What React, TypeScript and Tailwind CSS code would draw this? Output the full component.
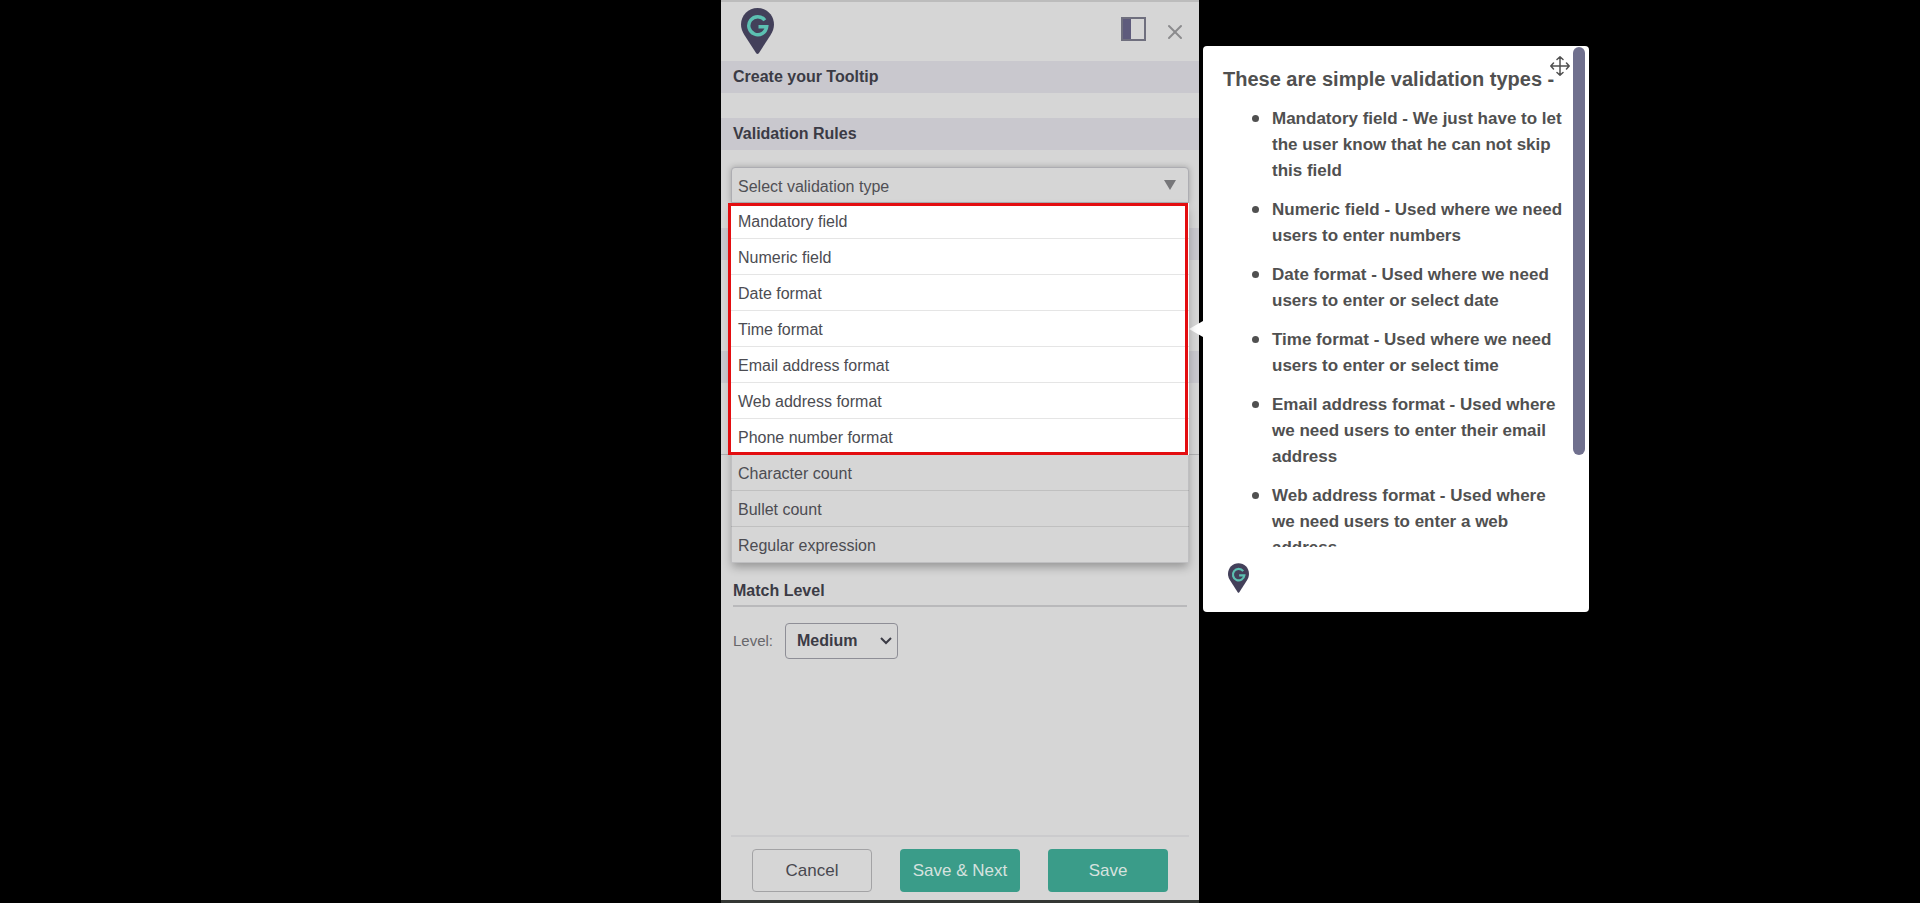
import { useState } from 'react'
import { X } from 'lucide-react'

const basicTypes = [
  'Mandatory field',
  'Numeric field',
  'Date format',
  'Time format',
  'Email address format',
  'Web address format',
  'Phone number format'
]

const otherTypes = ['Character count', 'Bullet count', 'Regular expression']

const hints = [
  'Mandatory field - We just have to let the user know that he can not skip this field',
  'Numeric field - Used where we need users to enter numbers',
  'Date format - Used where we need users to enter or select date',
  'Time format - Used where we need users to enter or select time',
  'Email address format - Used where we need users to enter their email address',
  'Web address format - Used where we need users to enter a web address'
]

const PinLogo = ({ className }: { className: string }) => (
  <svg viewBox="0 0 33 46" className={className} aria-hidden="true">
    <path
      d="M16.5 0C7.4 0 0 7.3 0 16.6c0 3.8 1.4 7.200 3.400 10.400L15.200 45.200q1.300 1.600 2.600 0L29.600 27C31.600 23.800 33 20.400 33 16.600 33 7.300 25.600 0 16.500 0z"
      fill="#43405a"
    />
    <path
      d="M23.900 12.200A9 9 0 1 0 25.700 18.800H17.500"
      fill="none"
      stroke="#5cc0b2"
      strokeWidth="3.400"
    />
  </svg>
)

const MoveIcon = () => (
  <svg
    viewBox="0 0 20 20"
    className="size-5"
    fill="none"
    stroke="#505050"
    strokeWidth="1.500"
    strokeLinecap="round"
    strokeLinejoin="round"
    aria-hidden="true"
  >
    <path d="M10 1v18M1 10h18M7 3.500L10 .8l3 2.700M7 16.500l3 2.700 3-2.700M3.500 7L.8 10l2.700 3M16.500 7l2.700 3-2.700 3" />
  </svg>
)

const SectionBar = ({ title }: { title?: string }) => (
  <div className="h-8 bg-[#c9c8ce] px-3 flex items-center">
    {title && <h2 className="text-base leading-6 font-bold text-[#3b3b45]">{title}</h2>}
  </div>
)

const TypeOption = ({ label }: { label: string }) => (
  <li role="option" aria-selected={false} className="h-9 border-b border-black/10 last:border-b-0">
    <button type="button" className="block h-full w-full px-[7px] pt-0.5 text-left text-base text-[#4c4c52]">
      {label}
    </button>
  </li>
)

const HintPopover = () => (
  <aside className="absolute left-full top-[46px] ml-1 w-[386px] rounded bg-white pt-px text-[#505050]">
    {/* pointer */}
    <svg viewBox="0 0 14 16" className="absolute right-full top-[275px] h-4 w-3.5" aria-hidden="true">
      <path d="M14 0L0 8l14 8z" fill="#fff" />
    </svg>

    <div className="h-[500px] overflow-y-auto [scrollbar-width:none] px-5 pt-4">
      <h3 className="text-xl leading-8 font-bold whitespace-nowrap">These are simple validation types -</h3>
      <ul className="mt-[11px] flex flex-col gap-[13px] pl-[49px] text-[17px] leading-[26px] font-bold">
        {hints.map((hint) => (
          <li key={hint} className="relative">
            <span className="absolute -left-5 top-[9px] size-[7px] rounded-full bg-[#505050]" />
            {hint}
          </li>
        ))}
      </ul>
    </div>

    <button type="button" aria-label="Move" className="absolute right-[19px] top-2.5">
      <MoveIcon />
    </button>
    <div className="absolute right-1 top-px h-[408px] w-3 rounded-full bg-[#70708e]" />

    <div className="pl-[25px] pt-4 pb-[19px]">
      <PinLogo className="h-[30px] w-[21px]" />
    </div>
  </aside>
)

const App = () => {
  const [level, setLevel] = useState('Medium')

  return (
    <div className="min-h-screen bg-black flex justify-center overflow-hidden font-['Liberation_Sans',Arial,sans-serif]">
      <main className="relative w-full max-w-[478px] min-h-screen flex flex-col bg-[#d6d6d6] border-b-3 border-[#343734]">

        {/* HEADER */}
        <header className="h-[61px] flex items-start justify-between border-t-2 border-[#bcbcbc] pl-5 pr-3">
          <PinLogo className="mt-1.5 h-[46px] w-[33px]" />
          <div className="flex">
            <button type="button" aria-label="Dock panel" className="mt-[15px] h-6 w-[25px] border-2 border-[#6f6f7e] flex">
              <span className="h-full w-2 bg-[#5e5b7c]" />
            </button>
            <button type="button" aria-label="Close" className="mt-[18px] ml-[17px] text-[#8b8b8d]">
              <X size={24} strokeWidth={2} />
            </button>
          </div>
        </header>

        <div className="flex flex-col gap-[25px]">
          <SectionBar title="Create your Tooltip" />
          <SectionBar title="Validation Rules" />
        </div>

        {/* VALIDATION TYPE */}
        <div className="relative mx-2.5 mt-[17px] h-9">
          <button
            type="button"
            aria-haspopup="listbox"
            aria-expanded="true"
            className="flex h-9 w-full items-center justify-between rounded-t border border-[#adadb2] bg-[#d6d6d6] px-1.5 pt-1 text-base text-[#505055] shadow-[0_0_6px_rgba(0,0,0,0.25)]"
          >
            Select validation type
            <svg viewBox="0 0 12 10" className="mr-1.5 mb-1 h-2.5 w-3" aria-hidden="true">
              <path d="M0 0h12L6 10z" fill="#77777a" />
            </svg>
          </button>

          <div
            role="listbox"
            aria-label="Validation type"
            className="absolute inset-x-0 top-full z-10 bg-[#d6d6d6] shadow-[0_5px_9px_-1px_rgba(0,0,0,0.3),inset_0_0_0_1px_#bfbfc1]"
          >
            <div className="relative">
              <ul className="bg-white">
                {basicTypes.map((type) => (
                  <TypeOption key={type} label={type} />
                ))}
              </ul>
              <div className="pointer-events-none absolute inset-y-0 -left-[3px] right-px border-3 border-[#e30d10]" />
            </div>
            <ul>
              {otherTypes.map((type) => (
                <TypeOption key={type} label={type} />
              ))}
            </ul>
          </div>
        </div>

        {/* SECTIONS BEHIND THE MENU */}
        <div className="mt-[25px] flex flex-col gap-[91px] border-b border-[#b0b0b2] pb-[71px]">
          <SectionBar />
          <SectionBar />
        </div>

        {/* MATCH LEVEL */}
        <section className="mt-[124px] px-3">
          <h2 className="border-b-2 border-[#b9b9bb] pb-0.5 text-base font-bold text-[#3b3b45]">Match Level</h2>
          <div className="mt-4 flex items-center gap-3">
            <label htmlFor="level" className="text-[15px] text-[#67676b]">Level:</label>
            <div className="relative">
              <select
                id="level"
                value={level}
                onChange={(e) => setLevel(e.target.value)}
                className="h-9 w-[113px] appearance-none rounded border border-[#8e8e96] bg-[#d6d6d6] pl-[11px] text-base font-bold text-[#3b3b45]"
              >
                <option>Low</option>
                <option>Medium</option>
                <option>High</option>
              </select>
              <svg viewBox="0 0 12 8" className="pointer-events-none absolute right-1.5 top-3.5 h-2 w-3" aria-hidden="true">
                <path d="M1 1l5 5 5-5" fill="none" stroke="#3b3b45" strokeWidth="2" />
              </svg>
            </div>
          </div>
        </section>

        {/* ACTIONS */}
        <footer className="mt-auto px-2.5">
          <div className="h-0.5 bg-[#cbcbcd]" />
          <div className="grid grid-cols-3 gap-7 px-[21px] pt-3 pb-2 text-[17px]">
            <button type="button" className="h-[43px] rounded border border-[#a3a3a5] text-[#48484f]">Cancel</button>
            <button type="button" className="h-[43px] rounded bg-[#3a9c89] text-[#d6e2df]">Save &amp; Next</button>
            <button type="button" className="h-[43px] rounded bg-[#3a9c89] text-[#d6e2df]">Save</button>
          </div>
        </footer>

        <HintPopover />
      </main>
    </div>
  )
}

export default App
